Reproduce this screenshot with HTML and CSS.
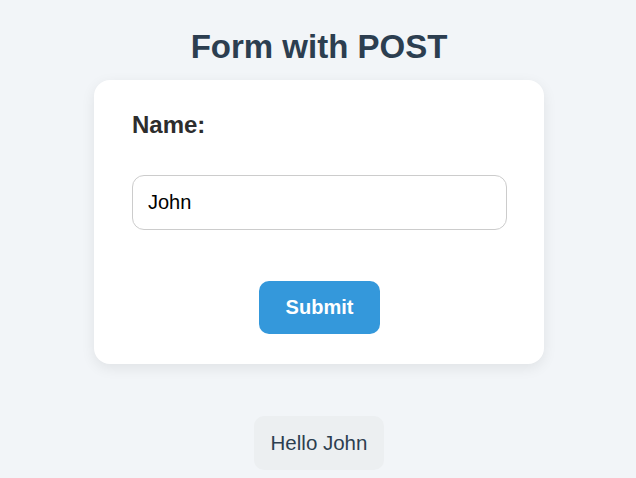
FILE: index.html
```html
<!DOCTYPE html>
<html lang="en">
<head>
<meta charset="utf-8">
<title>Form with POST</title>
<link rel="stylesheet" href="styles.css">
</head>
<body>
<h1 class="title">Form with POST</h1>
<form class="card" method="post">
  <label class="label" for="name">Name:</label>
  <input class="input" id="name" name="name" type="text" value="John">
  <div class="actions">
    <button class="submit" type="submit">Submit</button>
  </div>
</form>
<div class="result-wrap">
  <div class="result">Hello John</div>
</div>
</body>
</html>
```
FILE: styles.css
```css
html, body {
  margin: 0;
  padding: 0;
}
body {
  background: #f2f5f8;
  font-family: "Liberation Sans", Arial, sans-serif;
  padding-top: 28px;
  padding-left: 2px;
  display: flex;
  flex-direction: column;
  align-items: center;
}
.title {
  margin: 0 0 15px;
  font-size: 33px;
  line-height: 37px;
  font-weight: bold;
  color: #2c3e50;
  text-align: center;
}
.card {
  box-sizing: border-box;
  width: 450px;
  background: #ffffff;
  border-radius: 16px;
  box-shadow: 0 4px 14px rgba(0, 0, 0, 0.08);
  padding: 31px 37px 30px 38px;
  display: flex;
  flex-direction: column;
}
.label {
  font-size: 24px;
  line-height: 28px;
  font-weight: bold;
  color: #2d2d2d;
  margin-bottom: 36px;
}
.input {
  box-sizing: border-box;
  width: 375px;
  height: 55px;
  border: 1px solid #cccccc;
  border-radius: 12px;
  padding: 0 15px;
  font-family: "Liberation Sans", Arial, sans-serif;
  font-size: 20px;
  color: #000;
  background: #fff;
  outline: none;
}
.actions {
  display: flex;
  justify-content: center;
  margin-top: 51px;
}
.submit {
  border: none;
  background: #3498db;
  color: #ffffff;
  font-family: "Liberation Sans", Arial, sans-serif;
  font-size: 20px;
  line-height: 23px;
  font-weight: bold;
  padding: 15px 27px;
  border-radius: 10px;
}
.result-wrap {
  margin-top: 52px;
  display: flex;
  justify-content: center;
}
.result {
  background: #eceff1;
  color: #2c3e50;
  font-size: 20.5px;
  line-height: 24px;
  padding: 15px 16.5px;
  border-radius: 10px;
}
```
